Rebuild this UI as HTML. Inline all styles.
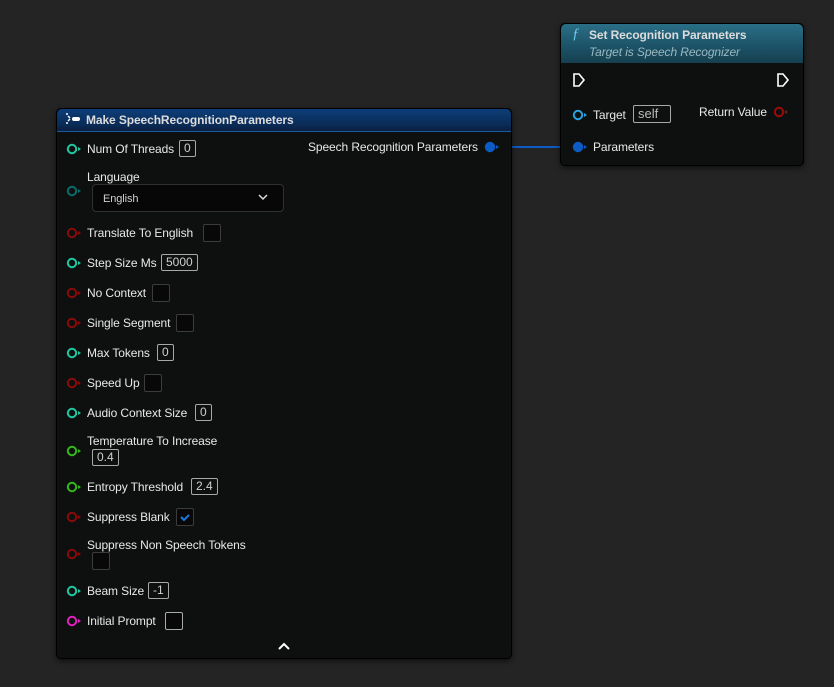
<!DOCTYPE html>
<html><head><meta charset="utf-8"><style>
body{margin:0;width:834px;height:687px;background:#242424;font-family:"Liberation Sans",sans-serif;font-size:12px;color:#e8e8e8;position:relative;overflow:hidden}
.a{position:absolute}
.node{position:absolute;background:#0e100f;border:1px solid #000;border-radius:5px;box-shadow:0 2px 6px rgba(0,0,0,.6)}
.lbl{position:absolute;white-space:nowrap;line-height:14px;letter-spacing:-0.1px}
.num{position:absolute;border:1px solid #a8a8a8;border-radius:2px;color:#cfcfcf;height:15px;line-height:15px;padding:0 4px;font-size:12px;box-sizing:border-box}
.cb{position:absolute;width:18px;height:18px;background:#080808;border:1px solid #3c3c3c;border-radius:2px;box-sizing:border-box}
</style></head><body>

<div class="a" style="left:497px;top:146px;width:78px;height:2px;background:#0d5bc4"></div>

<div class="node" style="left:56px;top:108px;width:454px;height:549px">
 <div class="a" style="left:0;top:0;width:454px;height:22px;border-radius:5px 5px 0 0;background:linear-gradient(180deg,#0c3e78,#0a2c58 70%,#0b2040)"></div>
 <div class="a" style="left:0;top:22px;width:454px;height:1px;background:#1d5aa0"></div>
</div>
<svg class="a" style="left:64px;top:112px" width="18" height="14"><path d="M2 2h2M4 4l2 2M2 11h2M4 9l2-2" stroke="#fff" stroke-width="1.4" fill="none"/><rect x="8" y="5" width="8" height="4" rx="2" fill="#fff"/></svg>
<div class="lbl" style="left:86px;top:113px;font-weight:bold;font-size:12px;color:#dcdcdc">Make SpeechRecognitionParameters</div>

<div class="node" style="left:560px;top:23px;width:242px;height:141px">
 <div class="a" style="left:0;top:0;width:242px;height:39px;border-radius:5px 5px 0 0;background:linear-gradient(180deg,#2a6f86,#1c5166 60%,#16404f)"></div>
</div>
<div class="lbl" style="left:572px;top:27px;font-family:'Liberation Serif',serif;font-style:italic;font-size:15px;color:#6fc8e8">ƒ</div>
<div class="lbl" style="left:589px;top:28px;font-weight:bold;color:#dcdcdc">Set Recognition Parameters</div>
<div class="lbl" style="left:589px;top:45px;font-style:italic;color:#9ab8bf">Target is Speech Recognizer</div>
<svg class="a" style="left:572px;top:72px" width="14" height="16"><path d="M2 2h5l5 6-5 6H2z" stroke="#fff" stroke-width="1.6" fill="none"/></svg>
<svg class="a" style="left:776px;top:72px" width="14" height="16"><path d="M2 2h5l5 6-5 6H2z" stroke="#fff" stroke-width="1.6" fill="none"/></svg>
<svg class="a" style="left:572px;top:108px" width="16" height="14"><circle cx="6" cy="7" r="4.2" stroke="#29a3e0" stroke-width="2" fill="none"/><path d="M12 5l3 2-3 2z" fill="#29a3e0"/></svg>
<div class="lbl" style="left:593px;top:108px">Target</div>
<div class="num" style="left:633px;top:105px;height:18px;line-height:16px;width:38px;color:#bbb;font-size:13px">self</div>
<div class="lbl" style="left:699px;top:105px">Return Value</div>
<svg class="a" style="left:773px;top:105px" width="16" height="14"><circle cx="6" cy="7" r="4.2" stroke="#9a0c0c" stroke-width="2" fill="none"/><path d="M12 5l3 2-3 2z" fill="#9a0c0c"/></svg>
<svg class="a" style="left:572px;top:140px" width="16" height="14"><circle cx="6" cy="7" r="5.2" fill="#0d5bc4"/><path d="M12 5l3 2-3 2z" fill="#0d5bc4"/></svg>
<div class="lbl" style="left:593px;top:140px">Parameters</div>

<div class="lbl" style="left:308px;top:140px">Speech Recognition Parameters</div>
<svg class="a" style="left:484px;top:140px" width="16" height="14"><circle cx="6" cy="7" r="5.2" fill="#0d5bc4"/><path d="M12 5l3 2-3 2z" fill="#0d5bc4"/></svg>

<svg class="a" style="left:0;top:0" width="90" height="687">
<g stroke-width="2" fill="none">
<circle cx="72" cy="149" r="4.2" stroke="#1fc8a0"/>
<circle cx="72" cy="191" r="4.2" stroke="#0b6a6a"/>
<circle cx="72" cy="233" r="4.2" stroke="#8a0a0a"/>
<circle cx="72" cy="263" r="4.2" stroke="#1fc8a0"/>
<circle cx="72" cy="293" r="4.2" stroke="#8a0a0a"/>
<circle cx="72" cy="323" r="4.2" stroke="#8a0a0a"/>
<circle cx="72" cy="353" r="4.2" stroke="#1fc8a0"/>
<circle cx="72" cy="383" r="4.2" stroke="#8a0a0a"/>
<circle cx="72" cy="413" r="4.2" stroke="#1fc8a0"/>
<circle cx="72" cy="451" r="4.2" stroke="#34b81c"/>
<circle cx="72" cy="487" r="4.2" stroke="#34b81c"/>
<circle cx="72" cy="517" r="4.2" stroke="#8a0a0a"/>
<circle cx="72" cy="554" r="4.2" stroke="#8a0a0a"/>
<circle cx="72" cy="591" r="4.2" stroke="#1fc8a0"/>
<circle cx="72" cy="621" r="4.2" stroke="#e020c0"/>
</g>
<g>
<path d="M78 147l3 2-3 2z" fill="#1fc8a0"/>
<path d="M78 189l3 2-3 2z" fill="#0b6a6a"/>
<path d="M78 231l3 2-3 2z" fill="#8a0a0a"/>
<path d="M78 261l3 2-3 2z" fill="#1fc8a0"/>
<path d="M78 291l3 2-3 2z" fill="#8a0a0a"/>
<path d="M78 321l3 2-3 2z" fill="#8a0a0a"/>
<path d="M78 351l3 2-3 2z" fill="#1fc8a0"/>
<path d="M78 381l3 2-3 2z" fill="#8a0a0a"/>
<path d="M78 411l3 2-3 2z" fill="#1fc8a0"/>
<path d="M78 449l3 2-3 2z" fill="#34b81c"/>
<path d="M78 485l3 2-3 2z" fill="#34b81c"/>
<path d="M78 515l3 2-3 2z" fill="#8a0a0a"/>
<path d="M78 552l3 2-3 2z" fill="#8a0a0a"/>
<path d="M78 589l3 2-3 2z" fill="#1fc8a0"/>
<path d="M78 619l3 2-3 2z" fill="#e020c0"/>
</g>
</svg>

<div class="lbl" style="left:87px;top:142px">Num Of Threads</div><div class="num" style="left:179px;top:140px;height:17px">0</div>
<div class="lbl" style="left:87px;top:170px">Language</div>
<div class="a" style="left:92px;top:184px;width:192px;height:28px;background:#070707;border:1px solid #303030;border-radius:4px;box-sizing:border-box"></div>
<div class="lbl" style="left:103px;top:192px;font-size:11px;color:#cfcfcf">English</div>
<svg class="a" style="left:257px;top:193px" width="12" height="8"><path d="M2 2l4 4 4-4" stroke="#ddd" stroke-width="1.5" fill="none"/></svg>
<div class="lbl" style="left:87px;top:226px">Translate To English</div><div class="cb" style="left:203px;top:224px"></div>
<div class="lbl" style="left:87px;top:256px">Step Size Ms</div><div class="num" style="left:161px;top:254px;height:17px">5000</div>
<div class="lbl" style="left:87px;top:286px">No Context</div><div class="cb" style="left:152px;top:284px"></div>
<div class="lbl" style="left:87px;top:316px">Single Segment</div><div class="cb" style="left:176px;top:314px"></div>
<div class="lbl" style="left:87px;top:346px">Max Tokens</div><div class="num" style="left:157px;top:344px;height:17px">0</div>
<div class="lbl" style="left:87px;top:376px">Speed Up</div><div class="cb" style="left:144px;top:374px"></div>
<div class="lbl" style="left:87px;top:406px">Audio Context Size</div><div class="num" style="left:195px;top:404px;height:17px">0</div>
<div class="lbl" style="left:87px;top:434px">Temperature To Increase</div><div class="num" style="left:92px;top:449px;height:17px">0.4</div>
<div class="lbl" style="left:87px;top:480px">Entropy Threshold</div><div class="num" style="left:191px;top:478px;height:17px">2.4</div>
<div class="lbl" style="left:87px;top:510px">Suppress Blank</div>
<div class="cb" style="left:176px;top:508px"><svg width="16" height="16" style="position:absolute;left:0;top:0"><path d="M4 8l3 3 5-5" stroke="#1a78e0" stroke-width="2" fill="none"/></svg></div>
<div class="lbl" style="left:87px;top:538px">Suppress Non Speech Tokens</div><div class="cb" style="left:92px;top:552px"></div>
<div class="lbl" style="left:87px;top:584px">Beam Size</div><div class="num" style="left:148px;top:582px;height:17px">-1</div>
<div class="lbl" style="left:87px;top:614px">Initial Prompt</div><div class="cb" style="left:165px;top:612px;border-color:#aaa"></div>
<svg class="a" style="left:277px;top:642px" width="14" height="10"><path d="M2 7l5-5 5 5" stroke="#fff" stroke-width="2" fill="none"/></svg>
</body></html>
